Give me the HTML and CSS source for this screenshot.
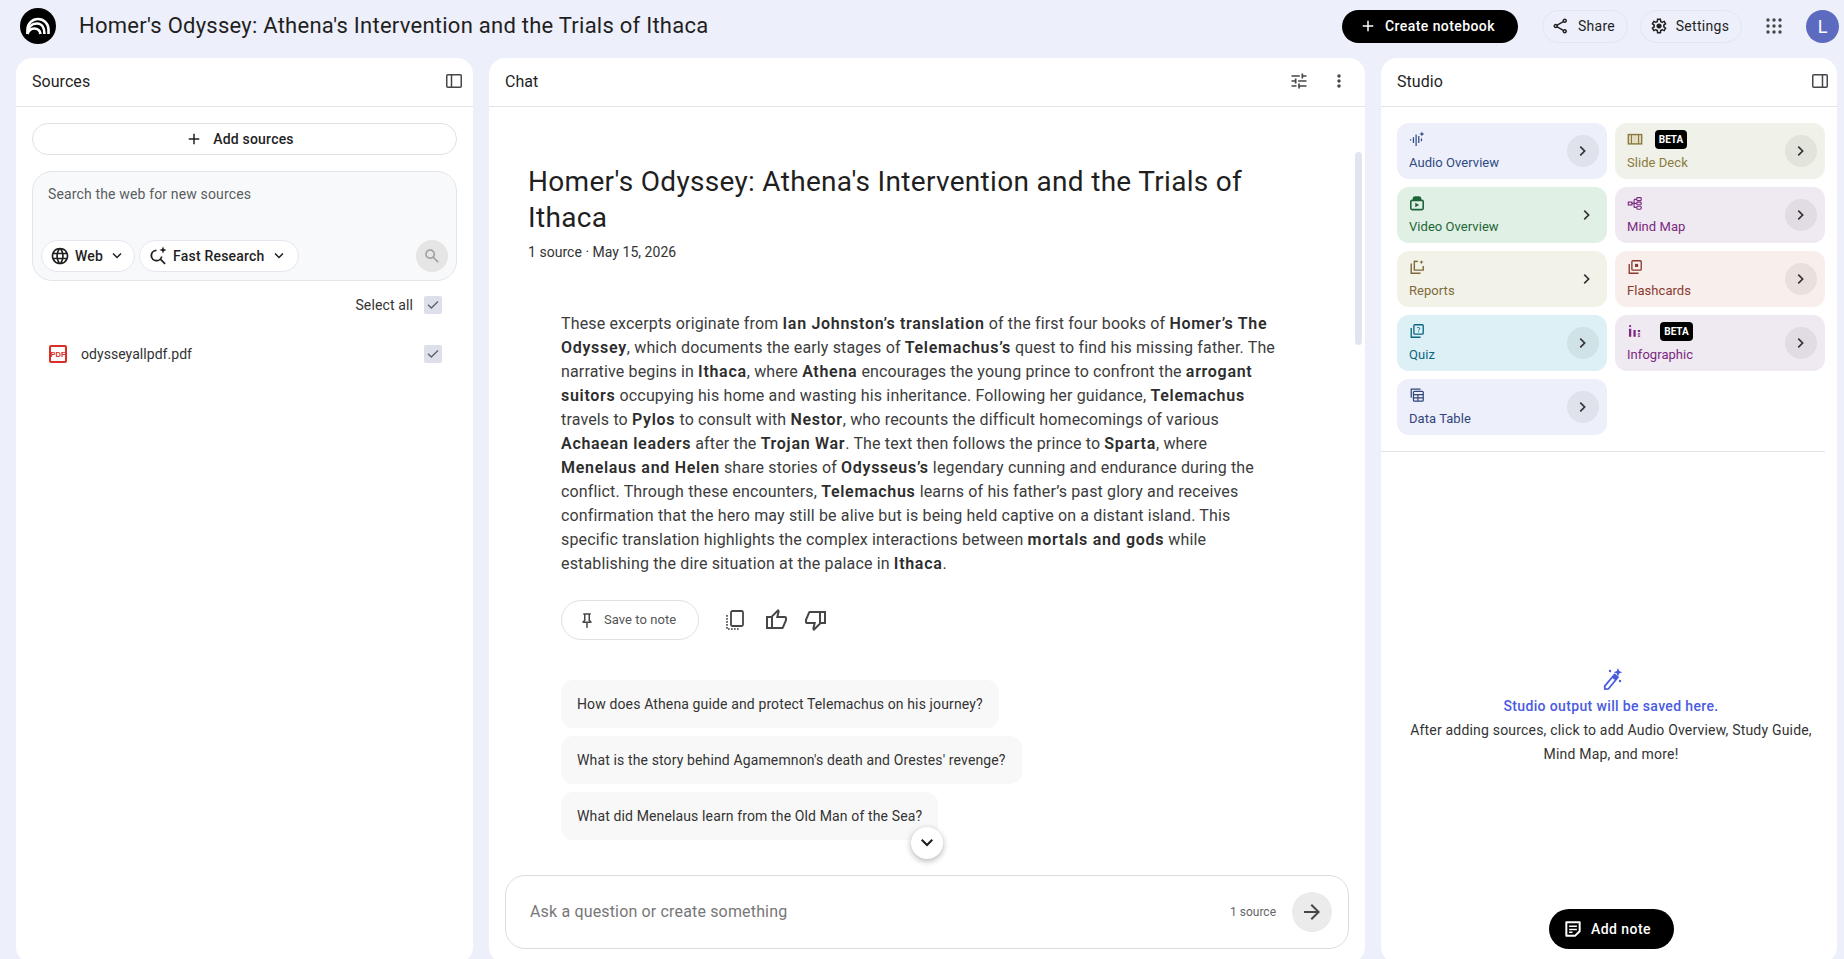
FILE: index.html
```html
<!DOCTYPE html>
<html lang="en">
<head>
<meta charset="utf-8">
<title>Homer's Odyssey</title>
<link rel="stylesheet" href="styles.css">
</head>
<body>
<svg class="sprite" aria-hidden="true">
<symbol id="add" viewBox="0 -960 960 960"><path d="M440-440H200v-80h240v-240h80v240h240v80H520v240h-80v-240Z"/></symbol>
<symbol id="chev" viewBox="0 -960 960 960"><path d="M504-480 320-664l56-56 240 240-240 240-56-56 184-184Z"/></symbol>
<symbol id="down" viewBox="0 -960 960 960"><path d="M480-345 240-585l56-56 184 184 184-184 56 56-240 240Z"/></symbol>
<symbol id="check" viewBox="0 -960 960 960"><path d="M382-240 154-468l57-57 171 171 367-367 57 57-424 424Z"/></symbol>
<symbol id="more" viewBox="0 -960 960 960"><path d="M480-160q-33 0-56.500-23.500T400-240q0-33 23.500-56.500T480-320q33 0 56.500 23.500T560-240q0 33-23.500 56.500T480-160Zm0-240q-33 0-56.500-23.500T400-480q0-33 23.500-56.500T480-560q33 0 56.500 23.500T560-480q0 33-23.500 56.500T480-400Zm0-240q-33 0-56.500-23.500T400-720q0-33 23.500-56.500T480-800q33 0 56.500 23.500T560-720q0 33-23.500 56.500T480-640Z"/></symbol>
<symbol id="arrow" viewBox="0 -960 960 960"><path d="M647-440H160v-80h487L423-744l57-56 320 320-320 320-57-56 224-224Z"/></symbol>
<symbol id="search" viewBox="0 -960 960 960"><path d="M784-120 532-372q-30 24-69 38t-83 14q-109 0-184.500-75.500T120-580q0-109 75.500-184.500T380-840q109 0 184.500 75.500T640-580q0 44-14 83t-38 69l252 252-56 56ZM380-400q75 0 127.500-52.500T560-580q0-75-52.500-127.500T380-760q-75 0-127.500 52.500T200-580q0 75 52.500 127.500T380-400Z"/></symbol>
<symbol id="up" viewBox="0 -960 960 960"><path d="M720-120H280v-520l280-280 50 50q7 7 11.500 19t4.500 23v14l-44 174h258q32 0 56 24t24 56v80q0 7-2 15t-4 15L794-168q-9 20-30 34t-44 14Zm-360-80h360l120-280v-80H480l54-220-174 174v406Zm0-406v406-406Zm-80-34v80H160v360h120v80H80v-520h200Z"/></symbol>
<symbol id="dn" viewBox="0 -960 960 960"><path d="M240-840h440v520L400-40l-50-50q-7-7-11.500-19t-4.500-23v-14l44-174H120q-32 0-56-24t-24-56v-80q0-7 2-15t4-15l120-282q9-20 30-34t44-14Zm360 80H240L120-480v80h360l-54 220 174-174v-406Zm0 406v-406 406Zm80 34v-80h120v-360H680v-80h200v520H680Z"/></symbol>
<symbol id="pin" viewBox="0 -960 960 960"><path d="m640-480 80 80v80H520v240l-40 40-40-40v-240H240v-80l80-80v-280h-40v-80h400v80h-40v280Zm-286 80h252l-46-46v-314H400v314l-46 46Zm126 0Z"/></symbol>
<symbol id="tune" viewBox="0 -960 960 960"><path d="M440-120v-240h80v80h320v80H520v80h-80Zm-320-80v-80h240v80H120Zm160-160v-80H120v-80h160v-80h80v240h-80Zm160-80v-80h400v80H440Zm160-160v-240h80v80h160v80H680v80h-80Zm-480-80v-80h400v80H120Z"/></symbol>
<symbol id="share" viewBox="0 -960 960 960"><path d="M680-80q-50 0-85-35t-35-85q0-6 3-28L282-392q-16 15-37 23.500t-45 8.500q-50 0-85-35t-35-85q0-50 35-85t85-35q24 0 45 8.500t37 23.500l281-164q-2-7-2.500-13.500T560-760q0-50 35-85t85-35q50 0 85 35t35 85q0 50-35 85t-85 35q-24 0-45-8.500T598-672L317-508q2 7 2.500 13.500t.5 14.500q0 8-.5 14.500T317-452l281 164q16-15 37-23.500t45-8.500q50 0 85 35t35 85q0 50-35 85t-85 35Zm0-80q17 0 28.500-11.500T720-200q0-17-11.500-28.500T680-240q-17 0-28.500 11.500T640-200q0 17 11.500 28.500T680-160ZM200-440q17 0 28.500-11.500T240-480q0-17-11.500-28.500T200-520q-17 0-28.500 11.500T160-480q0 17 11.500 28.500T200-440Zm480-280q17 0 28.500-11.500T720-760q0-17-11.500-28.500T680-800q-17 0-28.500 11.500T640-760q0 17 11.500 28.500T680-720Z"/></symbol>
<symbol id="gear" viewBox="0 -960 960 960"><path d="m370-80-16-128q-13-5-24.500-12T307-235l-119 50L78-375l103-78q-1-7-1-13.500v-27q0-6.500 1-13.500L78-585l110-190 119 50q11-8 23-15t24-12l16-128h220l16 128q13 5 24.500 12t22.500 15l119-50 110 190-103 78q1 7 1 13.500v27q0 6.500-2 13.500l103 78-110 190-118-50q-11 8-23 15t-24 12L590-80H370Zm70-80h79l14-106q31-8 57.500-23.500T639-327l99 41 39-68-86-65q5-14 7-29.500t2-31.500q0-16-2-31.500t-7-29.500l86-65-39-68-99 42q-22-23-48.500-38.500T533-694l-13-106h-79l-14 106q-31 8-57.500 23.500T321-633l-99-41-39 68 86 64q-5 15-7 30t-2 32q0 16 2 31t7 30l-86 65 39 68 99-42q22 23 48.500 38.500T427-266l13 106Zm42-180q58 0 99-41t41-99q0-58-41-99t-99-41q-59 0-99.500 41T342-480q0 58 40.500 99t99.500 41Zm-2-140Z"/></symbol>
<symbol id="globe" viewBox="0 -960 960 960"><path d="M480-80q-82 0-155-31.500t-127.500-86Q143-252 111.500-325T80-480q0-83 31.500-155.500t86-127Q252-817 325-848.500T480-880q83 0 155.500 31.500t127 86q54.500 54.500 86 127T880-480q0 82-31.500 155t-86 127.500q-54.500 54.500-127 86T480-80Zm0-82q26-36 45-75t31-83H404q12 44 31 83t45 75Zm-104-16q-18-33-31.500-68.500T322-320H204q29 50 72.500 87t99.500 55Zm208 0q56-18 99.500-55t72.500-87H638q-9 38-22.500 73.500T584-178ZM170-400h136q-3-20-4.500-39.500T300-480q0-21 1.500-40.500T306-560H170q-5 20-7.500 39.500T160-480q0 21 2.500 40.500T170-400Zm216 0h188q3-20 4.500-39.500T580-480q0-21-1.500-40.500T574-560H386q-3 20-4.500 39.500T380-480q0 21 1.500 40.500T386-400Zm268 0h136q5-20 7.500-39.500T800-480q0-21-2.500-40.500T790-560H654q3 20 4.500 39.500T660-480q0 21-1.500 40.500T654-400Zm-16-240h118q-29-50-72.500-87T584-782q18 33 31.500 68.500T638-640Zm-234 0h152q-12-44-31-83t-45-75q-26 36-45 75t-31 83Zm-200 0h118q9-38 22.500-73.500T376-782q-56 18-99.500 55T204-640Z"/></symbol>
</svg>

<header class="topbar">
  <svg class="logo" viewBox="0 0 36 36"><circle cx="18" cy="18" r="18" fill="#000"/><g fill="none" stroke="#fff" stroke-width="2.600"><path d="M7.500 26V21.500A10.500 10.500 0 0 1 28.500 21.500V26"/><path d="M7.500 26C8 19 12 15.500 17 15.500C22 15.500 24.500 20 24.500 26"/><path d="M7.500 26C9 22 11.500 20.500 14 20.500C17.500 20.500 20 22.500 20.500 26"/></g></svg>
  <h1 class="nb-title">Homer's Odyssey: Athena's Intervention and the Trials of Ithaca</h1>
  <button class="pill pill-black create"><svg class="ico18"><use href="#add"/></svg>Create notebook</button>
  <button class="pill pill-line share"><svg class="ico18"><use href="#share"/></svg>Share</button>
  <button class="pill pill-line settings"><svg class="ico18"><use href="#gear"/></svg>Settings</button>
  <svg class="apps" viewBox="0 0 16 16"><g fill="#444746"><circle cx="2" cy="2" r="1.700"/><circle cx="8" cy="2" r="1.700"/><circle cx="14" cy="2" r="1.700"/><circle cx="2" cy="8" r="1.700"/><circle cx="8" cy="8" r="1.700"/><circle cx="14" cy="8" r="1.700"/><circle cx="2" cy="14" r="1.700"/><circle cx="8" cy="14" r="1.700"/><circle cx="14" cy="14" r="1.700"/></g></svg>
  <div class="avatar">L</div>
</header>

<main class="columns">
  <section class="panel">
    <div class="panel-head"><span>Sources</span>
      <svg class="head-ico" viewBox="0 0 18 18"><rect x="1.750" y="2.750" width="14.500" height="12.500" rx="1" fill="none" stroke="#444746" stroke-width="1.500"/><path d="M6.500 3v12" stroke="#444746" stroke-width="1.500"/></svg>
    </div>
    <div class="sources-body">
      <button class="add-sources"><svg class="ico18"><use href="#add"/></svg>Add sources</button>
      <div class="search-box">
        <div class="search-hint">Search the web for new sources</div>
        <div class="search-row">
          <span class="chip"><svg class="ico18 big"><use href="#globe"/></svg>Web<svg class="ico18"><use href="#down"/></svg></span>
          <span class="chip"><svg class="ico18 big" viewBox="0 0 20 20"><path d="M15 .5l1 2.500 2.500 1-2.500 1-1 2.500-1-2.500-2.500-1 2.500-1zM8.500 3.500a6 6 0 1 0 3.700 10.700l4.300 4.300 1.200-1.200-4.300-4.300c.6-.8 1-1.700 1.100-2.600h-1.700A4.300 4.300 0 1 1 8.500 5.200z"/></svg>Fast Research<svg class="ico18"><use href="#down"/></svg></span>
          <span class="search-go"><svg class="ico18"><use href="#search"/></svg></span>
        </div>
      </div>
      <div class="select-row"><span>Select all</span><span class="cbox"><svg><use href="#check"/></svg></span></div>
      <div class="file-row">
        <svg class="pdf" viewBox="0 0 18 18"><rect x="1" y="1" width="16" height="16" rx="1" fill="#fff" stroke="#d93025" stroke-width="2"/><text class="pdf-label" x="9" y="11.500">PDF</text></svg>
        <span class="file-name">odysseyallpdf.pdf</span><span class="cbox"><svg><use href="#check"/></svg></span>
      </div>
    </div>
  </section>

  <section class="panel">
    <div class="panel-head"><span>Chat</span>
      <span class="head-actions"><svg class="ico20"><use href="#tune"/></svg><svg class="ico20"><use href="#more"/></svg></span>
    </div>
    <div class="chat-scroll">
      <h2 class="chat-title">Homer's Odyssey: Athena's Intervention and the Trials of Ithaca</h2>
      <div class="chat-meta">1 source · May 15, 2026</div>
      <p class="summary">These excerpts originate from <b>Ian Johnston’s translation</b> of the first four books of <b>Homer’s The Odyssey</b>, which documents the early stages of <b>Telemachus’s</b> quest to find his missing father. The narrative begins in <b>Ithaca</b>, where <b>Athena</b> encourages the young prince to confront the <b>arrogant suitors</b> occupying his home and wasting his inheritance. Following her guidance, <b>Telemachus</b> travels to <b>Pylos</b> to consult with <b>Nestor</b>, who recounts the difficult homecomings of various <b>Achaean leaders</b> after the <b>Trojan War</b>. The text then follows the prince to <b>Sparta</b>, where <b>Menelaus and Helen</b> share stories of <b>Odysseus’s</b> legendary cunning and endurance during the conflict. Through these encounters, <b>Telemachus</b> learns of his father’s past glory and receives confirmation that the hero may still be alive but is being held captive on a distant island. This specific translation highlights the complex interactions between <b>mortals and gods</b> while establishing the dire situation at the palace in <b>Ithaca</b>.</p>
      <div class="msg-actions">
        <button class="save-note"><svg class="ico18"><use href="#pin"/></svg>Save to note</button>
        <svg class="ico24" viewBox="0 0 24 24"><rect x="8" y="3" width="12" height="15" rx="1.500" fill="none" stroke="#444746" stroke-width="1.800"/><path d="M4 7v14h13" fill="none" stroke="#444746" stroke-width="1.600" stroke-dasharray="1.700 1.300"/></svg>
        <svg class="ico24"><use href="#up"/></svg>
        <svg class="ico24"><use href="#dn"/></svg>
      </div>
      <div class="suggestions">
        <div class="sugg">How does Athena guide and protect Telemachus on his journey?</div>
        <div class="sugg">What is the story behind Agamemnon's death and Orestes' revenge?</div>
        <div class="sugg">What did Menelaus learn from the Old Man of the Sea?</div>
      </div>
      <span class="scroll-thumb"></span>
      <button class="scroll-down"><svg class="ico24 dark"><use href="#down"/></svg></button>
    </div>
    <div class="chat-input">
      <span class="placeholder">Ask a question or create something</span>
      <span class="src-count">1 source</span>
      <span class="send"><svg class="ico24"><use href="#arrow"/></svg></span>
    </div>
  </section>

  <section class="panel">
    <div class="panel-head studio-head"><span>Studio</span>
      <svg class="head-ico" viewBox="0 0 18 18"><rect x="1.750" y="2.750" width="14.500" height="12.500" rx="1" fill="none" stroke="#444746" stroke-width="1.500"/><path d="M11.500 3v12" stroke="#444746" stroke-width="1.500"/></svg>
    </div>
    <div class="tools">
      <div class="tool c-audio"><div class="tool-txt"><div class="tool-top"><svg class="tool-ico" viewBox="0 0 18 18"><path d="M1 10h1.500M5 7v6.500M8 4v13M11 5.500v8M14 8.500v3" fill="none" stroke="currentColor" stroke-width="1.400"/><path d="M14.500 .5l.8 2 2 .8-2 .8-.8 2-.8-2-2-.8 2-.8z"/></svg></div><div class="tool-name">Audio Overview</div></div><span class="go"><svg><use href="#chev"/></svg></span></div>
      <div class="tool c-slide"><div class="tool-txt"><div class="tool-top"><svg class="tool-ico" viewBox="0 0 18 18"><rect x="1.500" y="4" width="15" height="10.500" fill="#e3ddc4" stroke="currentColor" stroke-width="1.600"/><path d="M5 4v10.500M13 4v10.500" stroke="currentColor" stroke-width="1.300"/></svg><span class="beta">BETA</span></div><div class="tool-name">Slide Deck</div></div><span class="go"><svg><use href="#chev"/></svg></span></div>
      <div class="tool c-video"><div class="tool-txt"><div class="tool-top"><svg class="tool-ico" viewBox="0 0 18 18"><rect x="2" y="6" width="14" height="10.500" rx="1.500" fill="none" stroke="currentColor" stroke-width="1.800"/><path d="M4 5.500C4 2.500 5 1.500 7 1.500h4c2 0 3 1 3 4z"/><path d="M7 8.800l4.500 2.500L7 13.800z"/></svg></div><div class="tool-name">Video Overview</div></div><span class="go bare"><svg><use href="#chev"/></svg></span></div>
      <div class="tool c-mind"><div class="tool-txt"><div class="tool-top"><svg class="tool-ico" viewBox="0 0 18 18"><path d="M5.500 9.500H8M8 5h3M8 14h3M8 5v9M8 9.500h3" fill="none" stroke="currentColor" stroke-width="1.300"/><rect x="1.500" y="8" width="4" height="3.200" fill="none" stroke="currentColor" stroke-width="1.300"/><rect x="11" y="3" width="5" height="3.300" rx="1" fill="none" stroke="currentColor" stroke-width="1.300"/><rect x="11" y="8" width="5" height="3" rx="1" fill="none" stroke="currentColor" stroke-width="1.300"/><rect x="11" y="12.700" width="5" height="3.300" rx="1" fill="none" stroke="currentColor" stroke-width="1.300"/></svg></div><div class="tool-name">Mind Map</div></div><span class="go"><svg><use href="#chev"/></svg></span></div>
      <div class="tool c-reports"><div class="tool-txt"><div class="tool-top"><svg class="tool-ico" viewBox="0 0 18 18"><path d="M6 2v10.500h10V8M2.500 5v11H13" fill="none" stroke="currentColor" stroke-width="1.600"/><path d="M6 2.700h4" stroke="currentColor" stroke-width="1.600"/><path d="M14 1l.7 1.800 1.800.7-1.800.7-.7 1.800-.7-1.800-1.800-.7 1.800-.7z"/></svg></div><div class="tool-name">Reports</div></div><span class="go bare"><svg><use href="#chev"/></svg></span></div>
      <div class="tool c-flash"><div class="tool-txt"><div class="tool-top"><svg class="tool-ico" viewBox="0 0 18 18"><rect x="5.500" y="2" width="10.500" height="10.500" rx="1" fill="none" stroke="currentColor" stroke-width="1.500"/><path d="M2.500 5.500V16H13" fill="none" stroke="currentColor" stroke-width="1.500"/><rect x="9" y="5.500" width="3.500" height="3.500"/></svg></div><div class="tool-name">Flashcards</div></div><span class="go"><svg><use href="#chev"/></svg></span></div>
      <div class="tool c-quiz"><div class="tool-txt"><div class="tool-top"><svg class="tool-ico" viewBox="0 0 18 18"><rect x="5.500" y="2" width="10.500" height="10.500" rx="1" fill="none" stroke="currentColor" stroke-width="1.500"/><path d="M2.500 5.500V16H13" fill="none" stroke="currentColor" stroke-width="1.500"/><path d="M9 5.700c.3-1 3.200-1 3.200.7 0 1-1.300 1-1.400 2.100M10.800 9.500v1" fill="none" stroke="currentColor" stroke-width="1.100"/></svg></div><div class="tool-name">Quiz</div></div><span class="go"><svg><use href="#chev"/></svg></span></div>
      <div class="tool c-info"><div class="tool-txt"><div class="tool-top"><svg class="tool-ico" viewBox="0 0 18 18"><path d="M3.500 6.500v9M8.500 8v7.500M13.500 8v2M13.500 11.500v1.500M13.500 14v1.500" fill="none" stroke="currentColor" stroke-width="2.600"/><circle cx="3.500" cy="3.500" r="1.300"/></svg><span class="beta wide">BETA</span></div><div class="tool-name">Infographic</div></div><span class="go"><svg><use href="#chev"/></svg></span></div>
      <div class="tool c-data"><div class="tool-txt"><div class="tool-top"><svg class="tool-ico" viewBox="0 0 18 18"><path d="M2.500 12V2.500H13" fill="none" stroke="currentColor" stroke-width="1.400"/><rect x="5" y="5" width="11" height="11" rx="1" fill="none" stroke="currentColor" stroke-width="1.400"/><path d="M5 8.500h11M5 12.300h11M10 8.500V16" stroke="currentColor" stroke-width="1.300"/></svg></div><div class="tool-name">Data Table</div></div><span class="go"><svg><use href="#chev"/></svg></span></div>
    </div>
    <div class="studio-empty">
      <svg class="wand" viewBox="0 0 24 24"><path d="M15.500 7.500l3.500 2.800-9.500 11.500-3.600.3-.2-2.900z" fill="none" stroke="#4a5be0" stroke-width="1.800" stroke-linejoin="round"/><path d="M13 10.800l3.500 2.800 2.500-3.300-3.500-2.800z" fill="#4a5be0"/><path d="M19 1l1.200 3 3 1.200-3 1.200L19 9.400l-1.200-3-3-1.200 3-1.200z" fill="#4a5be0"/><circle cx="11" cy="4" r="1.200" fill="#4a5be0"/><circle cx="21" cy="14" r="1.200" fill="#4a5be0"/></svg>
      <div class="empty-title">Studio output will be saved here.</div>
      <div class="empty-text">After adding sources, click to add Audio Overview, Study Guide, Mind Map, and more!</div>
    </div>
    <button class="pill pill-black add-note"><svg class="ico20" viewBox="0 0 18 18"><path d="M3 3h12v8l-4 4H3z" fill="none" stroke="#fff" stroke-width="1.800" stroke-linejoin="round"/><path d="M5.500 6.500h7M5.500 9.500h7M5.500 12h3" stroke="#fff" stroke-width="1.400"/></svg>Add note</button>
  </section>
</main>
</body>
</html>
```
FILE: styles.css
```css
* { box-sizing: border-box; }
html, body { margin: 0; height: 959px; overflow: hidden; }
body { background: #edeffa; color: #1f1f1f; font-family: Roboto, "Liberation Sans", sans-serif; font-size: 14px; letter-spacing: .05px; }
button { font: inherit; letter-spacing: inherit; color: inherit; background: none; border: 0; padding: 0; }
svg { fill: currentColor; display: block; flex: none; }
.sprite { display: none; }
.ico18 { width: 18px; height: 18px; }
.ico20 { width: 20px; height: 20px; }
.ico24 { width: 24px; height: 24px; color: #444746; }
.ico24.dark { color: #1f1f1f; }

.topbar { height: 58px; display: flex; align-items: center; padding: 0 5px 6px 20px; }
.logo { width: 36px; height: 36px; }
.nb-title { margin: 0 0 0 23px; font-size: 22px; font-weight: 400; line-height: 28px; flex: 1; letter-spacing: .25px; color: #1f1f1f; }
.pill { display: flex; align-items: center; justify-content: center; height: 33px; border-radius: 17px; font-size: 14px; font-weight: 500; }
.pill-black { background: #000; color: #fff; letter-spacing: .42px; }
.pill-line { border: 1px solid #e2e5f2; color: #1f1f1f; font-weight: 400; gap: 8px; letter-spacing: .3px; padding-right: 3px; }
.create { width: 176px; gap: 8px; padding-right: 6px; }
.share { width: 86px; margin-left: 24px; }
.settings { width: 102px; margin-left: 12px; }
.apps { width: 16px; height: 16px; margin-left: 24px; }
.avatar { width: 33px; height: 33px; margin-left: 24px; border-radius: 50%; background: #5c6bc0; color: #fff; font-size: 18px; display: flex; align-items: center; justify-content: center; }

.columns { display: grid; grid-template-columns: 457px 876px 456px; gap: 16px; padding-left: 16px; }
.panel { position: relative; height: 905px; background: #fff; border-radius: 16px; display: flex; flex-direction: column; overflow: hidden; }
.panel-head { height: 49px; flex: none; border-bottom: 1px solid #e3e4e8; display: flex; align-items: center; justify-content: space-between; padding: 0 10px 2px 16px; font-size: 16px; color: #1f1f1f; }
.studio-head { padding-right: 8px; }
.head-ico { width: 18px; height: 18px; }
.head-actions { display: flex; gap: 20px; color: #444746; padding-right: 6px; }

.sources-body { padding: 16px; display: flex; flex-direction: column; }
.add-sources { height: 32px; border: 1px solid #dfe1e7; border-radius: 16px; display: flex; align-items: center; justify-content: center; gap: 10px; font-weight: 500; padding-right: 10px; letter-spacing: .2px; }
.search-box { margin-top: 16px; height: 110px; padding: 12px 8px 8px; border: 1px solid #e3e5ea; border-radius: 20px; background: #f8f9fb; display: flex; flex-direction: column; justify-content: space-between; }
.search-hint { color: #5a5d60; padding-left: 7px; line-height: 20px; letter-spacing: .15px; }
.search-row { display: flex; align-items: center; gap: 4px; }
.chip { height: 32px; padding: 0 8px; background: #fff; border: 1px solid #e5e7ee; border-radius: 16px; display: flex; align-items: center; gap: 5px; font-weight: 500; letter-spacing: .2px; }
.chip + .chip { padding-right: 10px; }
.big { width: 20px; height: 20px; }
.search-go { margin-left: auto; width: 32px; height: 32px; border-radius: 50%; background: #e5e5e6; display: flex; align-items: center; justify-content: center; color: #9a9c9e; }
.select-row { margin-top: 14px; height: 20px; display: flex; align-items: center; justify-content: flex-end; gap: 11px; padding-right: 15px; color: #333; letter-spacing: .12px; }
.cbox { width: 18px; height: 18px; background: #dde0ea; border-radius: 2px; display: flex; align-items: center; justify-content: center; color: #5f6368; }
.cbox svg { width: 16px; height: 16px; }
.file-row { margin-top: 29px; display: flex; align-items: center; padding: 0 15px 0 17px; height: 20px; }
.pdf { width: 18px; height: 18px; }
.pdf-label { font-family: "Liberation Sans", sans-serif; font-size: 7.5px; font-weight: 700; fill: #d93025; text-anchor: middle; letter-spacing: 0; }
.file-name { flex: 1; margin-left: 14px; color: #333; }

.chat-scroll { position: relative; flex: 1; overflow: hidden; padding: 57px 40px 0 40px; }
.chat-title { margin: 0 0 0 -1px; width: 730px; font-size: 28px; font-weight: 400; line-height: 36px; color: #1f1f1f; letter-spacing: .31px; }
.chat-meta { margin: 6px 0 0 -1px; line-height: 20px; color: #333; letter-spacing: .03px; }
.summary { margin: 50px 0 0 32px; width: 718px; font-size: 16px; line-height: 24px; color: #3c3c3c; letter-spacing: .15px; }
.summary b { font-weight: 600; color: #2d2d2d; letter-spacing: .7px; }
.msg-actions { margin: 24px 0 0 32px; display: flex; align-items: center; }
.save-note { width: 138px; height: 40px; border: 1px solid #dfe1e7; border-radius: 20px; font-size: 13px; color: #555; display: flex; align-items: center; gap: 8px; padding-left: 16px; margin-right: 24px; padding-bottom: 1px; }
.save-note svg { color: #444746; }
.msg-actions .ico24 + .ico24 { margin-left: 16.5px; }
.suggestions { margin: 40px 0 0 32px; display: flex; flex-direction: column; align-items: flex-start; gap: 8px; }
.sugg { height: 48px; padding: 0 16px; background: #f8f8f8; border-radius: 12px; display: flex; align-items: center; color: #333; letter-spacing: .13px; }
.scroll-thumb { position: absolute; left: 866px; top: 45px; width: 7px; height: 193px; background: #e2e5f0; border-radius: 4px; }
.scroll-down { position: absolute; left: 422px; top: 720px; width: 32px; height: 32px; border-radius: 50%; background: #fff; box-shadow: 0 2px 6px rgba(0,0,0,.3); display: flex; align-items: center; justify-content: center; }

.chat-input { flex: none; height: 74px; margin: 0 16px 14px; border: 1px solid #dadce4; border-radius: 20px; display: flex; align-items: center; padding: 0 16px 0 24px; }
.placeholder { flex: 1; font-size: 16px; color: #777; letter-spacing: .16px; padding-bottom: 2px; }
.src-count { font-size: 12px; color: #666; margin-right: 16px; letter-spacing: 0; }
.send { width: 40px; height: 40px; border-radius: 50%; background: #ebebeb; display: flex; align-items: center; justify-content: center; }

.tools { display: grid; grid-template-columns: 210px 210px; gap: 8px; padding: 16px 0 16px 16px; margin-right: 12px; border-bottom: 1px solid #e3e4e8; }
.tool { height: 56px; border-radius: 12px; display: flex; align-items: center; justify-content: space-between; padding: 0 8px 0 12px; font-size: 13px; }
.tool-txt { align-self: flex-start; padding-top: 4px; }
.tool-top { height: 24px; display: flex; align-items: center; margin-bottom: 4px; }
.tool-name { line-height: 16px; }
.tool-ico { width: 16px; height: 16px; }
.beta { margin-left: 12px; width: 32px; height: 19px; background: #000; color: #fff; border-radius: 4px; font-size: 10px; font-weight: 700; display: flex; align-items: center; justify-content: center; letter-spacing: 0; }
.beta.wide { margin-left: 17px; width: 33px; }
.go { width: 32px; height: 32px; border-radius: 50%; background: rgba(60,64,67,.08); display: flex; align-items: center; justify-content: center; color: #333; }
.go svg { width: 20px; height: 20px; }
.go.bare { background: none; margin-right: -4px; }
.c-audio { background: #edeffa; color: #2f4a82; }
.c-slide { background: #f0f1e8; color: #8a7a40; }
.c-video { background: #e0f0e4; color: #1d6538; }
.c-mind { background: #efe9f1; color: #7b2a80; }
.c-reports { background: #f3f2e9; color: #7d6a3a; }
.c-flash { background: #f8eeec; color: #8a3a2e; }
.c-quiz { background: #dcf0f5; color: #0d6680; }
.c-info { background: #efe9f1; color: #7b2a80; }
.c-data { background: #edeffa; color: #32467a; }

.studio-empty { padding: 215px 4px 0 8px; text-align: center; }
.wand { width: 24px; height: 24px; margin: 0 auto; }
.empty-title { color: #4a5be0; font-weight: 500; line-height: 24px; margin-top: 3px; letter-spacing: .36px; }
.empty-text { line-height: 24px; color: #333; padding: 0 14px; letter-spacing: .19px; }
.add-note { position: absolute; left: 168px; top: 851px; width: 125px; height: 40px; border-radius: 20px; gap: 8px; padding-right: 9px; }
```
